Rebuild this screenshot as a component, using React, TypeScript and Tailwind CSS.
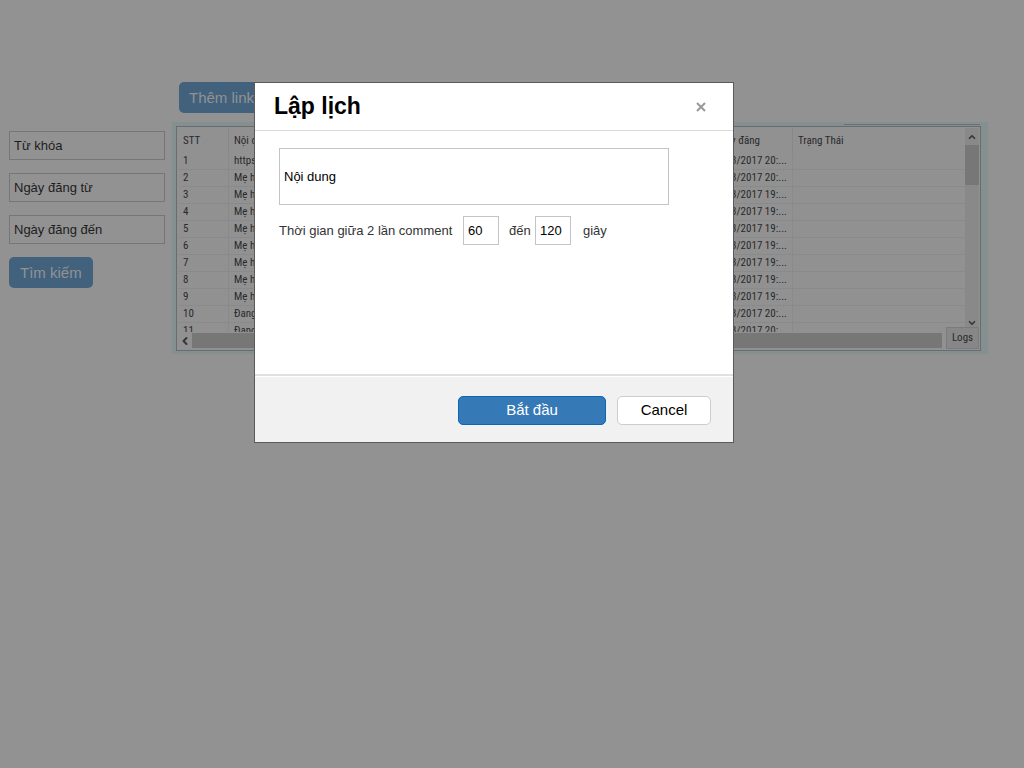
import React from "react";
import { ChevronDown, ChevronLeft, ChevronUp } from "lucide-react";

const rows = [
  { id: 1, content: "https://www", date: "3/03/2017 20:..." },
  { id: 2, content: "Mẹ hỏi", date: "3/03/2017 20:..." },
  { id: 3, content: "Mẹ hỏi", date: "3/03/2017 19:..." },
  { id: 4, content: "Mẹ hỏi", date: "3/03/2017 19:..." },
  { id: 5, content: "Mẹ hỏi", date: "3/03/2017 19:..." },
  { id: 6, content: "Mẹ hỏi", date: "3/03/2017 19:..." },
  { id: 7, content: "Mẹ hỏi", date: "3/03/2017 19:..." },
  { id: 8, content: "Mẹ hỏi", date: "3/03/2017 19:..." },
  { id: 9, content: "Mẹ hỏi", date: "3/03/2017 19:..." },
  { id: 10, content: "Đang", date: "3/03/2017 20:..." },
  { id: 11, content: "Đang", date: "3/03/2017 20:..." },
];

function FilterField({ label }: { label: string }) {
  return (
    <input
      type="text"
      aria-label={label}
      defaultValue={label}
      className="h-[29px] w-full border border-[#767676] bg-transparent px-1 text-[13px] text-[#1d1d1d] outline-none"
    />
  );
}

function Filters() {
  return (
    <form className="flex w-[156px] shrink-0 flex-col items-start gap-[13px] pt-[49px]">
      <FilterField label="Từ khóa" />
      <FilterField label="Ngày đăng từ" />
      <FilterField label="Ngày đăng đến" />
      <button
        type="button"
        className="h-[31px] rounded-[5px] bg-[#42617d] px-[11px] pt-px text-[15px] text-[#929292]"
      >
        Tìm kiếm
      </button>
    </form>
  );
}

function LinkTable() {
  return (
    <div className="bg-[#849090] pt-px pr-[7px] pb-[3px] pl-1">
      <div className="mr-px flex h-[3px] justify-end">
        <div className="h-[2px] w-[136px] border-b border-[#686f70] bg-[#8b8f8f]" />
      </div>
      <div className="flex h-[225px] flex-col border border-[#676c70] bg-[#919191] p-px">
        <div className="flex min-h-0 flex-1">
          <div className="min-w-0 flex-1 overflow-hidden">
            <table className="w-full table-fixed border-separate border-spacing-0 text-left font-['Liberation_Sans_Narrow','Roboto_Condensed','Roboto',sans-serif] text-[11px] leading-4 text-[#2a2a2a]">
              <colgroup>
                <col className="w-[51px]" />
                <col />
                <col className="w-[92px]" />
                <col className="w-[172px]" />
              </colgroup>
              <thead>
                <tr className="h-[25px]">
                  <th className="border-r border-[#888888] px-[5px] py-0 font-normal">STT</th>
                  <th className="border-r border-[#888888] px-[5px] py-0 font-normal">Nội dung</th>
                  <th className="border-r border-[#888888] py-0 pr-8 pl-0 text-right font-normal whitespace-nowrap">
                    Ngày đăng
                  </th>
                  <th className="px-[5px] py-0 font-normal">Trạng Thái</th>
                </tr>
              </thead>
              <tbody>
                {rows.map((row) => (
                  <tr key={row.id} className="h-[17px]">
                    <td className="border-r border-b border-[#8a8a8a] px-[5px] py-0">{row.id}</td>
                    <td className="border-r border-b border-[#8a8a8a] px-[5px] py-0">{row.content}</td>
                    <td className="border-r border-b border-[#8a8a8a] px-[5px] py-0 text-right whitespace-nowrap">
                      {row.date}
                    </td>
                    <td className="border-b border-[#8a8a8a] p-0" />
                  </tr>
                ))}
              </tbody>
            </table>
          </div>
          <div className="flex w-[14px] flex-col items-center justify-between bg-[#898989] text-[#363636]">
            <div className="flex w-full flex-col items-center">
              <ChevronUp className="mt-1 mb-[3px] h-[10px] w-[10px]" strokeWidth={4} />
              <div className="h-10 w-full bg-[#777777]" />
            </div>
            <ChevronDown className="mb-1 h-[10px] w-[10px]" strokeWidth={4} />
          </div>
        </div>
        <div className="flex h-[17px] items-end">
          <div className="flex h-[17px] w-[14px] items-center justify-center text-[#363636]">
            <ChevronLeft className="h-3 w-3" strokeWidth={4} />
          </div>
          <div className="mr-1 mb-px h-[15px] flex-1 bg-[#777777]" />
          <button
            type="button"
            className="h-[22px] w-[33px] shrink-0 border border-[#757d7f] bg-[#878787] font-['Liberation_Sans_Narrow','Roboto_Condensed','Roboto',sans-serif] text-[11px] text-[#2a2a2a]"
          >
            Logs
          </button>
        </div>
      </div>
    </div>
  );
}

function ScheduleDialog() {
  return (
    <div
      role="dialog"
      aria-labelledby="schedule-title"
      className="flex w-[480px] flex-col border border-[#5a5a5a] bg-white"
    >
      <header className="flex h-12 items-center justify-between border-b border-[#dcdcdc] pr-[26px] pl-[19px]">
        <h1 id="schedule-title" className="text-[23px] font-bold text-black">
          Lập lịch
        </h1>
        <button type="button" aria-label="Đóng" className="text-[#999999]">
          <svg viewBox="0 0 12 12" className="h-3 w-3" fill="none" stroke="currentColor" strokeWidth="2">
            <path d="M2 2 L10 10 M10 2 L2 10" />
          </svg>
        </button>
      </header>
      <div className="flex h-[243px] flex-col gap-[11px] px-6 pt-[17px] text-[13px] text-[#333333]">
        <input
          type="text"
          aria-label="Nội dung"
          defaultValue="Nội dung"
          className="h-[57px] w-[390px] border border-[#c4c4c4] px-1 text-black outline-none"
        />
        <div className="flex items-center">
          <label htmlFor="delay-min" className="w-[184px]">
            Thời gian giữa 2 lần comment
          </label>
          <input
            id="delay-min"
            type="text"
            defaultValue="60"
            className="h-[29px] w-9 border border-[#c4c4c4] px-1 text-black outline-none"
          />
          <label htmlFor="delay-max" className="w-9 pl-[10px]">
            đến
          </label>
          <input
            id="delay-max"
            type="text"
            defaultValue="120"
            className="h-[29px] w-9 border border-[#c4c4c4] px-1 text-black outline-none"
          />
          <span className="pl-3">giây</span>
        </div>
      </div>
      <footer className="flex h-[68px] flex-col border-t-2 border-[#e0e0e0] pt-px">
        <div className="flex flex-1 items-center justify-end gap-[11px] bg-[#f1f1f1] pt-px pr-[22px] text-[15px]">
          <button
            type="button"
            className="h-[29px] w-[148px] rounded-[5px] border border-[#0a66b8] bg-[#357ab6] pt-px text-white"
          >
            Bắt đầu
          </button>
          <button
            type="button"
            className="h-[29px] w-[94px] rounded-[5px] border border-[#cccccc] bg-white pt-px text-black"
          >
            Cancel
          </button>
        </div>
      </footer>
    </div>
  );
}

export default function App() {
  return (
    <div className="relative min-h-screen bg-[#929292] font-['Liberation_Sans',Arial,sans-serif]">
      <div className="flex gap-[7px] pt-[82px] pr-9 pl-[9px]">
        <Filters />
        <main className="flex min-w-0 flex-1 flex-col items-stretch gap-[9px]">
          <div className="pl-[7px]">
            <button
              type="button"
              className="h-[31px] rounded-[5px] bg-[#42617d] px-[10px] pt-px text-[15px] text-[#929292]"
            >
              Thêm link
            </button>
          </div>
          <LinkTable />
        </main>
      </div>
      <div className="absolute inset-0 pt-[82px] pl-[254px]">
        <ScheduleDialog />
      </div>
    </div>
  );
}
